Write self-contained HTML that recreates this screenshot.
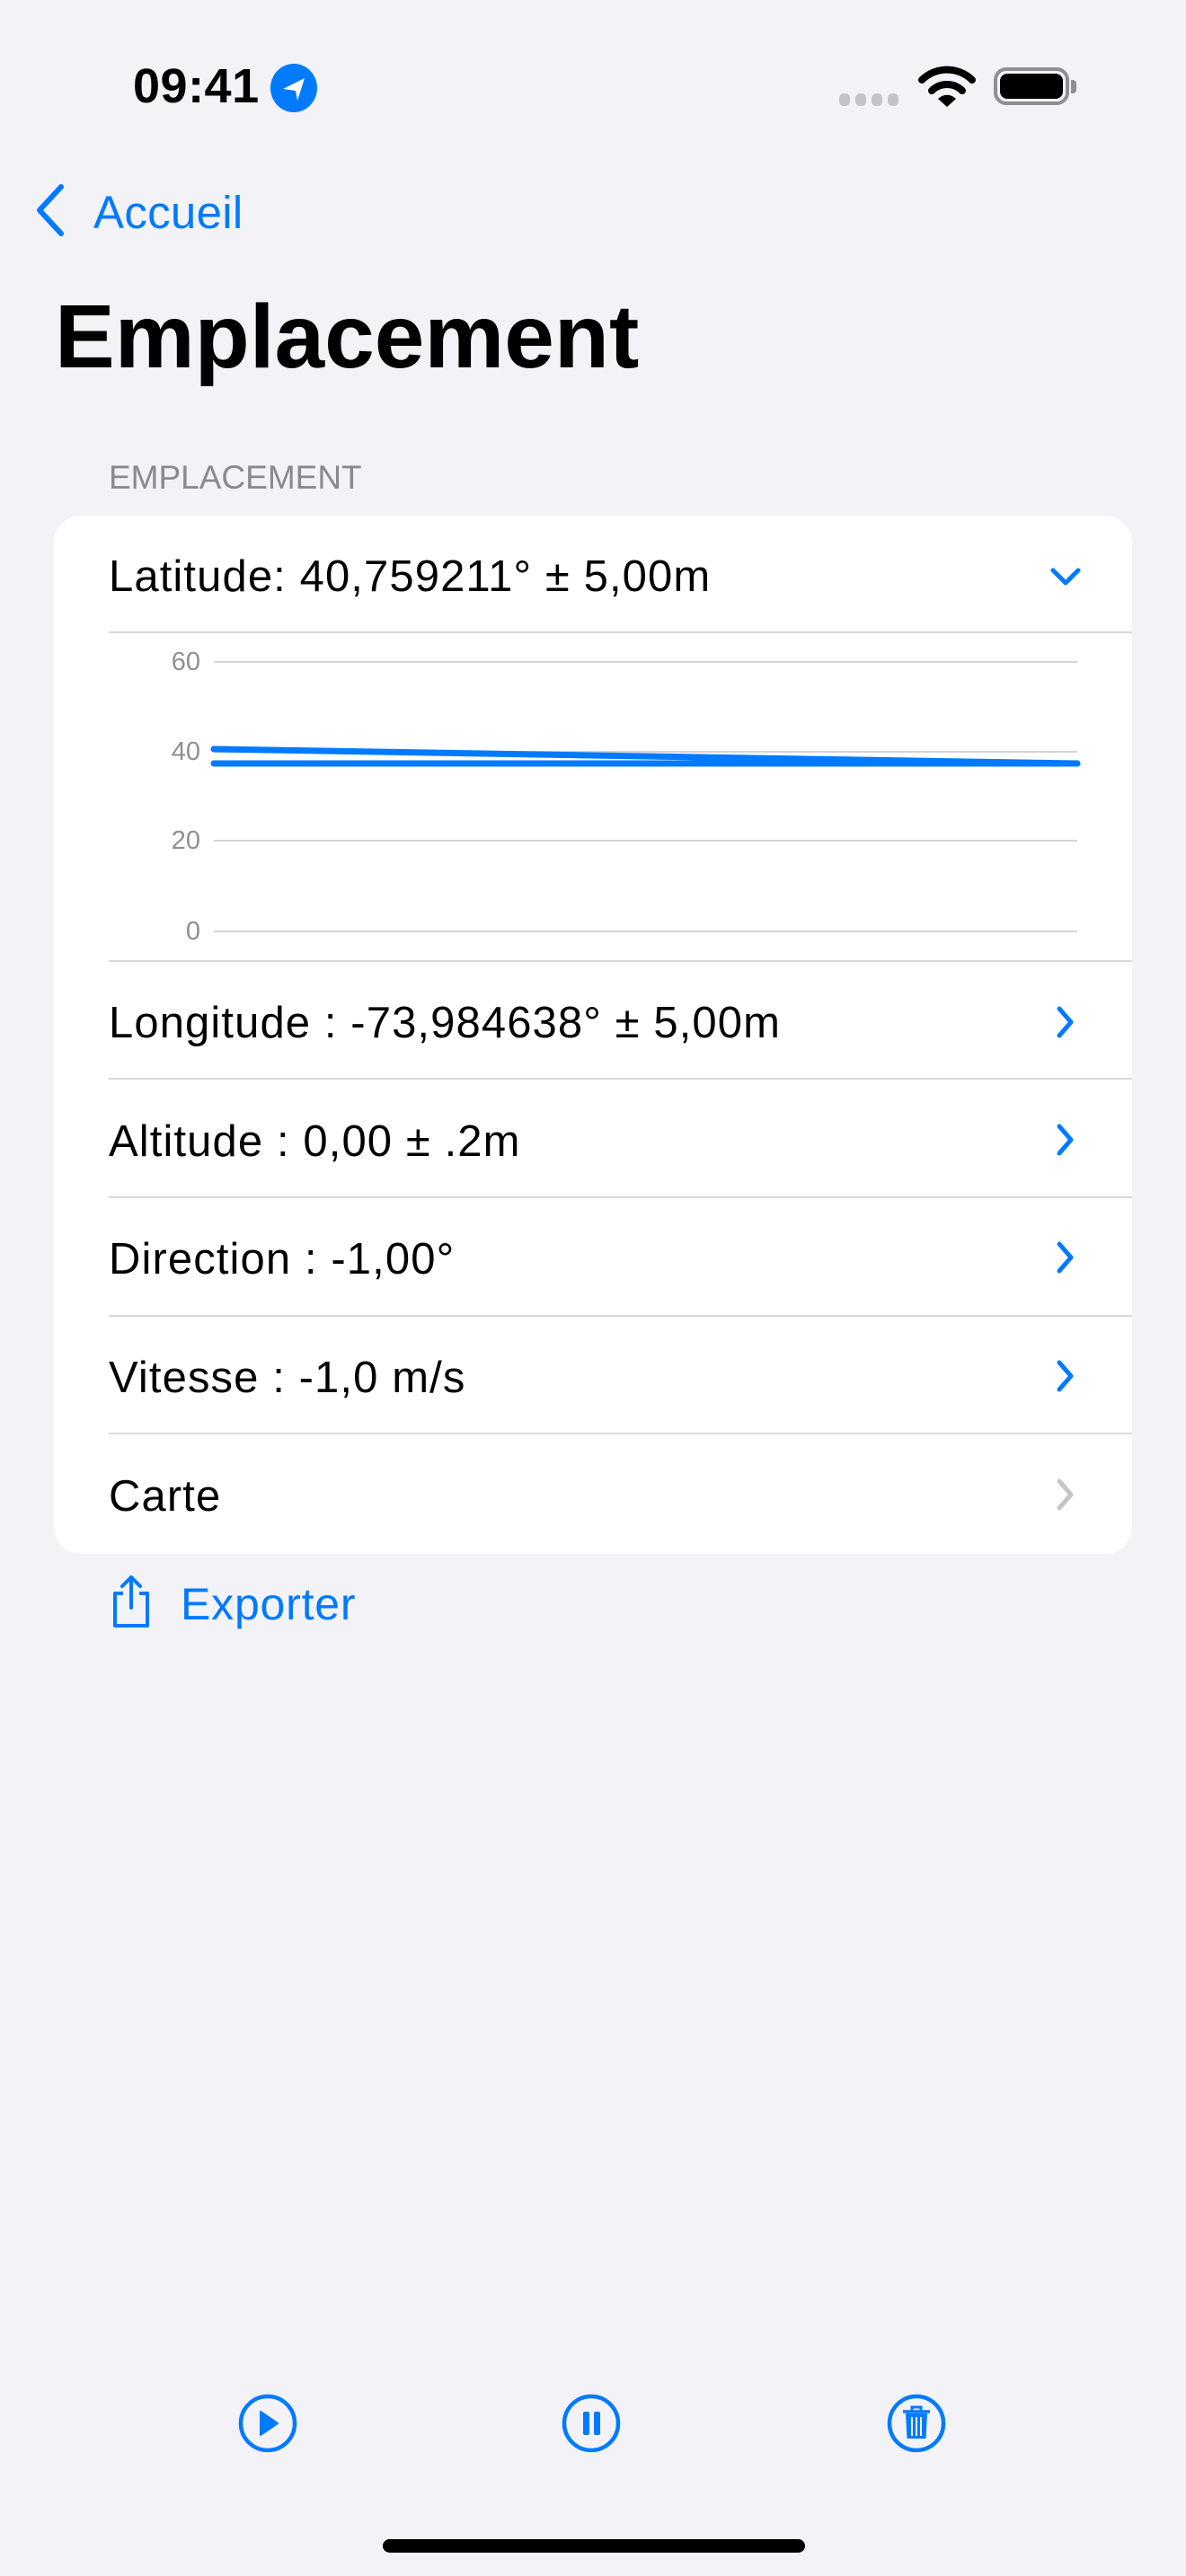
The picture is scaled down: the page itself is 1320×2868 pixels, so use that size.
<!DOCTYPE html>
<html><head><meta charset="utf-8"><style>
*{margin:0;padding:0;box-sizing:border-box}
body{width:1320px;height:2868px;background:#f2f2f7;font-family:"Liberation Sans",sans-serif;position:relative;overflow:hidden;color:#000}
.a{position:absolute}
.t{position:absolute;white-space:nowrap;line-height:60px;height:60px;font-size:49px;letter-spacing:1.1px}
.sep{position:absolute;left:61px;right:0;height:2px;background:#d8d8dc}
.lab{position:absolute;width:60px;text-align:right;font-size:29px;color:#8e8e93;line-height:36px}
.grid{position:absolute;left:178px;width:961px;height:2px;background:#d4d4d8}
</style></head><body>
<div class="t" style="left:148px;top:66px;font-size:54px;font-weight:bold;letter-spacing:0.5px">09:41</div>
<svg class="a" style="left:300px;top:70px" width="54" height="56" viewBox="0 0 54 56"><ellipse cx="27" cy="28" rx="26" ry="27" fill="#007aff"/><path d="M15 29 L39 17 L31 42 L29 31 Z" fill="#fff"/></svg>
<svg class="a" style="left:934px;top:102px" width="70" height="20"><rect x="0" y="2" width="12" height="14" rx="5" fill="#c4c4c8"/><rect x="18" y="2" width="12" height="14" rx="5" fill="#c4c4c8"/><rect x="36" y="2" width="12" height="14" rx="5" fill="#c4c4c8"/><rect x="54" y="2" width="12" height="14" rx="5" fill="#c4c4c8"/></svg>
<svg class="a" style="left:1022px;top:73px" width="64" height="48" viewBox="0 0 64 48"><path d="M4 16 A40 40 0 0 1 60 16" stroke="#000" stroke-width="8" fill="none" stroke-linecap="round"/><path d="M15 28 A24 24 0 0 1 49 28" stroke="#000" stroke-width="8" fill="none" stroke-linecap="round"/><path d="M22 37 L32 46 L42 37 A14 14 0 0 0 22 37Z" fill="#000"/></svg>
<div class="a" style="left:1106px;top:75px;width:84px;height:42px;border:4px solid #8e8e93;border-radius:14px"></div>
<div class="a" style="left:1113px;top:82px;width:70px;height:28px;background:#000;border-radius:8px"></div>
<div class="a" style="left:1192px;top:89px;width:6px;height:15px;background:#8e8e93;border-radius:0 4px 4px 0"></div>
<svg class="a" style="left:36px;top:204px" width="40" height="60"><path d="M32 4 L8 30 L32 56" stroke="#007aff" stroke-width="6" fill="none" stroke-linecap="round" stroke-linejoin="round"/></svg>
<div class="t" style="left:104px;top:207px;font-size:51px;color:#007aff;letter-spacing:0.3px">Accueil</div>
<div class="a" style="left:61px;top:320px;font-size:100px;font-weight:bold;line-height:110px;letter-spacing:0px">Emplacement</div>
<div class="a" style="left:121px;top:512px;font-size:37px;color:#8a8a8e;line-height:40px">EMPLACEMENT</div>
<div class="a" style="left:60px;top:574px;width:1200px;height:1156px;background:#fff;border-radius:30px">
  <div class="t" style="left:61px;top:38px">Latitude: 40,759211° ± 5,00m</div>
  <svg class="a" style="left:1108px;top:56px" width="36" height="24"><path d="M4 5 L18 19 L32 5" stroke="#007aff" stroke-width="5" fill="none" stroke-linecap="round" stroke-linejoin="round"/></svg>
  <div class="sep" style="top:129px"></div>
  <div class="lab" style="left:103px;top:145px">60</div>
  <div class="lab" style="left:103px;top:245px">40</div>
  <div class="lab" style="left:103px;top:344px">20</div>
  <div class="lab" style="left:103px;top:445px">0</div>
  <div class="grid" style="top:162px"></div>
  <div class="grid" style="top:262px"></div>
  <div class="grid" style="top:361px"></div>
  <div class="grid" style="top:462px"></div>
  <svg class="a" style="left:170px;top:250px" width="980" height="40"><path d="M8 10 L969 26" stroke="#007aff" stroke-width="7" stroke-linecap="round"/><path d="M8 26 L969 26" stroke="#007aff" stroke-width="7" stroke-linecap="round"/></svg>
  <div class="sep" style="top:495px"></div>
  <div class="t" style="left:61px;top:535px">Longitude : -73,984638° ± 5,00m</div>
  <div class="sep" style="top:626px"></div>
  <div class="t" style="left:61px;top:667px">Altitude : 0,00 ± .2m</div>
  <div class="sep" style="top:758px"></div>
  <div class="t" style="left:61px;top:798px">Direction : -1,00°</div>
  <div class="sep" style="top:890px"></div>
  <div class="t" style="left:61px;top:930px">Vitesse : -1,0 m/s</div>
  <div class="sep" style="top:1021px"></div>
  <div class="t" style="left:61px;top:1062px">Carte</div>
  <svg class="a" style="left:1114px;top:544px" width="24" height="40"><path d="M5 5 L18 20 L5 35" stroke="#007aff" stroke-width="5" fill="none" stroke-linecap="round" stroke-linejoin="round"/></svg>
  <svg class="a" style="left:1114px;top:675px" width="24" height="40"><path d="M5 5 L18 20 L5 35" stroke="#007aff" stroke-width="5" fill="none" stroke-linecap="round" stroke-linejoin="round"/></svg>
  <svg class="a" style="left:1114px;top:806px" width="24" height="40"><path d="M5 5 L18 20 L5 35" stroke="#007aff" stroke-width="5" fill="none" stroke-linecap="round" stroke-linejoin="round"/></svg>
  <svg class="a" style="left:1114px;top:938px" width="24" height="40"><path d="M5 5 L18 20 L5 35" stroke="#007aff" stroke-width="5" fill="none" stroke-linecap="round" stroke-linejoin="round"/></svg>
  <svg class="a" style="left:1114px;top:1070px" width="24" height="40"><path d="M5 5 L18 20 L5 35" stroke="#c4c4c7" stroke-width="5" fill="none" stroke-linecap="round" stroke-linejoin="round"/></svg>
</div>
<svg class="a" style="left:120px;top:1752px" width="52" height="62" viewBox="0 0 52 62"><path d="M17 22 H8 V58 H44 V22 H35" stroke="#007aff" stroke-width="4" fill="none" stroke-linejoin="round"/><path d="M26 38 V4 M16 14 L26 4 L36 14" stroke="#007aff" stroke-width="4" fill="none" stroke-linecap="round" stroke-linejoin="round"/></svg>
<div class="t" style="left:201px;top:1756px;font-size:50px;color:#007aff;letter-spacing:0.8px">Exporter</div>
<svg class="a" style="left:264px;top:2664px" width="68" height="68" viewBox="0 0 68 68"><circle cx="34" cy="34" r="30" stroke="#007aff" stroke-width="4.5" fill="none"/><path d="M26 21 L26 47 L45 34 Z" fill="#007aff" stroke="#007aff" stroke-width="2" stroke-linejoin="round"/></svg>
<svg class="a" style="left:624px;top:2664px" width="68" height="68" viewBox="0 0 68 68"><circle cx="34" cy="34" r="30" stroke="#007aff" stroke-width="4.5" fill="none"/><rect x="25" y="21" width="7" height="26" rx="2" fill="#007aff"/><rect x="37" y="21" width="7" height="26" rx="2" fill="#007aff"/></svg>
<svg class="a" style="left:986px;top:2664px" width="68" height="68" viewBox="0 0 68 68"><circle cx="34" cy="34" r="30" stroke="#007aff" stroke-width="4.5" fill="none"/><path d="M19 21 H49" stroke="#007aff" stroke-width="3.5"/><path d="M29 21 V16 H39 V21" stroke="#007aff" stroke-width="3" fill="none"/><path d="M22 23 L23.5 51 H44.5 L46 23 Z" fill="#007aff"/><path d="M29 27 V48 M34 27 V48 M39 27 V48" stroke="#fff" stroke-width="1.8"/></svg>
<div class="a" style="left:426px;top:2827px;width:470px;height:15px;background:#000;border-radius:8px"></div>
</body></html>
